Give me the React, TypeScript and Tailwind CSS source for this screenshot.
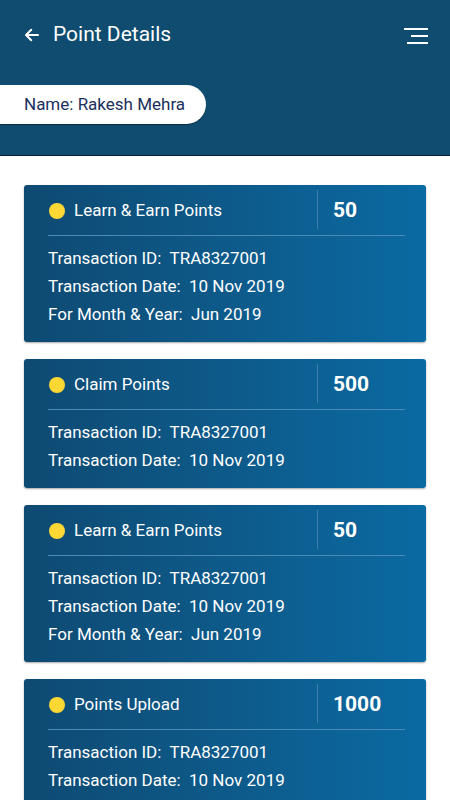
import React from "react";

interface PointEntry {
  title: string;
  points: string;
  transactionId: string;
  date: string;
  monthYear?: string;
}

const entries: PointEntry[] = [
  { title: "Learn & Earn Points", points: "50", transactionId: "TRA8327001", date: "10 Nov 2019", monthYear: "Jun 2019" },
  { title: "Claim Points", points: "500", transactionId: "TRA8327001", date: "10 Nov 2019" },
  { title: "Learn & Earn Points", points: "50", transactionId: "TRA8327001", date: "10 Nov 2019", monthYear: "Jun 2019" },
  { title: "Points Upload", points: "1000", transactionId: "TRA8327001", date: "10 Nov 2019" },
];

const Row = ({ label, value }: { label: string; value: string }) => (
  <div className="h-[28px] leading-[28px] whitespace-pre text-[17px] text-white">
    {label}
    {"  "}
    {value}
  </div>
);

const PointCard = ({ entry }: { entry: PointEntry }) => (
  <div className="rounded-[3px] bg-gradient-to-r from-[#0e4a72] to-[#0a6aa2] pl-6 pr-[21px] pb-[14px] shadow-[0_1px_2px_rgba(0,0,0,0.35)]">
    <div className="flex h-[51px] items-center border-b border-[#4a8bb5] pt-[1px]">
      <div className="flex flex-1 items-center gap-[9px] pl-[1px]">
        <span className="h-[16px] w-[16px] rounded-full bg-[#fdd835]" />
        <span className="text-[17px] text-white">{entry.title}</span>
      </div>
      <div className="mt-[4px] h-[39px] w-px self-start bg-[#3f7ea8]" />
      <div className="w-[87px] pl-[15px] text-[21px] font-bold text-white">{entry.points}</div>
    </div>
    <div className="pt-[8px]">
      <Row label="Transaction ID:" value={entry.transactionId} />
      <Row label="Transaction Date:" value={entry.date} />
      {entry.monthYear && <Row label="For Month & Year:" value={entry.monthYear} />}
    </div>
  </div>
);

export default function App() {
  return (
    <div className="h-[800px] w-[450px] overflow-hidden bg-white font-['Roboto',sans-serif]">
      <header className="h-[156px] border-b border-[#0a1c45] bg-[#0f4c6f]">
        <div className="flex h-[70px] items-center justify-between pl-[23px] pr-[22px]">
          <div className="flex items-center gap-[12px]">
            <svg width="18" height="18" viewBox="0 0 24 24" fill="none" stroke="white" strokeWidth="2.6" strokeLinecap="round" strokeLinejoin="round">
              <path d="M20 12H5" />
              <path d="M11 5l-7 7 7 7" />
            </svg>
            <h1 className="text-[21px] text-white">Point Details</h1>
          </div>
          <svg width="24" height="18" viewBox="0 0 24 18">
            <rect x="0" y="2" width="24" height="2" fill="white" />
            <rect x="7" y="9" width="17" height="2" fill="white" />
            <rect x="3" y="16" width="21" height="2" fill="#ffffff" />
          </svg>
        </div>
        <div className="mt-[15px] flex h-[39px] w-[206px] items-center rounded-r-[20px] bg-white pl-[24px] shadow-[0_1px_1px_rgba(0,0,0,0.4)]">
          <span className="text-[17px] text-[#1b2f5c]">Name: Rakesh Mehra</span>
        </div>
      </header>
      <main className="flex flex-col gap-[17px] px-6 pt-[29px]">
        {entries.map((entry, i) => (
          <PointCard key={i} entry={entry} />
        ))}
      </main>
    </div>
  );
}
